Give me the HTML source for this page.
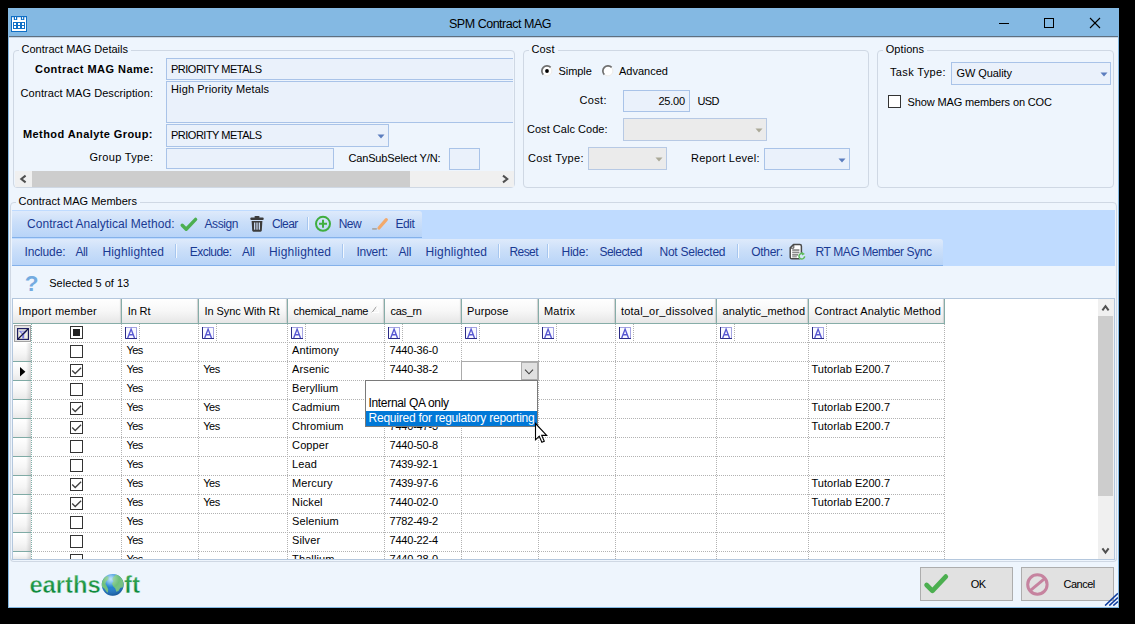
<!DOCTYPE html><html><head><meta charset="utf-8"><title>SPM Contract MAG</title><style>
html,body{margin:0;padding:0}body{width:1135px;height:624px;background:#000;position:relative;overflow:hidden;font-family:"Liberation Sans", sans-serif;}
div,svg,span{position:absolute;box-sizing:border-box}
.t{height:20px;line-height:20px;white-space:pre}
</style></head><body>
<div style="left:8px;top:8px;width:1111px;height:600px;background:#84B9E3"></div>
<div style="left:9px;top:37px;width:1109px;height:570px;background:#EEF5FD"></div>
<div style="left:9px;top:36px;width:1109px;height:1px;background:#5E6F80"></div>
<div style="left:9px;top:37px;width:1109px;height:1px;background:#C9D6E4"></div>
<svg style="left:11px;top:16px;" width="16" height="16" viewBox="0 0 16 16"><rect x="0.5" y="0.5" width="15" height="15" fill="#fff" stroke="#0F6FC6"/>
<rect x="0" y="0" width="16" height="1.2" fill="#0F6FC6"/>
<rect x="2.8" y="0" width="3.4" height="4" fill="#0F6FC6"/><rect x="9.9" y="0" width="3.4" height="4" fill="#0F6FC6"/>
<rect x="4" y="1" width="1" height="2.2" fill="#fff"/><rect x="11.1" y="1" width="1" height="2.2" fill="#fff"/>
<rect x="2" y="6" width="12" height="7" fill="#0F6FC6"/>
<g fill="#fff"><rect x="3" y="7" width="2" height="2"/><rect x="7" y="7" width="2" height="2"/><rect x="11" y="7" width="2" height="2"/>
<rect x="3" y="10" width="2" height="2"/><rect x="7" y="10" width="2" height="2"/><rect x="11" y="10" width="2" height="2"/></g></svg>
<svg style="left:995px;top:14px;" width="110" height="18" viewBox="0 0 110 18"><g stroke="#000" stroke-width="1" fill="none" shape-rendering="crispEdges">
<line x1="4" y1="9.5" x2="14" y2="9.5"/><rect x="49.5" y="4.5" width="9" height="9"/></g>
<g stroke="#000" stroke-width="1.1" fill="none"><line x1="95" y1="4" x2="105" y2="14"/><line x1="105" y1="4" x2="95" y2="14"/></g></svg>
<div style="left:13px;top:50px;width:502px;height:138px;border:1px solid #CFD8E4;border-radius:4px"></div>
<div style="left:18.5px;top:48px;width:112.5px;height:5px;background:#EEF5FD"></div>
<div style="left:523px;top:50px;width:346px;height:138px;border:1px solid #CFD8E4;border-radius:4px"></div>
<div style="left:528.5px;top:48px;width:29.0px;height:5px;background:#EEF5FD"></div>
<div style="left:877px;top:50px;width:237px;height:138px;border:1px solid #CFD8E4;border-radius:4px"></div>
<div style="left:882.75px;top:48px;width:44.25px;height:5px;background:#EEF5FD"></div>
<div style="left:10px;top:202px;width:1107px;height:360px;border:1px solid #CFD8E4;border-radius:4px"></div>
<div style="left:15.5px;top:200px;width:124.5px;height:5px;background:#EEF5FD"></div>
<div style="left:166px;top:58px;width:347px;height:22px;background:#EAF1FB;border:1px solid #A9C3E8;border-right:none"></div>
<div style="left:166px;top:81px;width:347px;height:42px;background:#EAF1FB;border:1px solid #A9C3E8;border-right:none"></div>
<div style="left:166px;top:124px;width:223px;height:23px;background:#EAF1FB;border:1px solid #A9C3E8"></div>
<div style="left:166px;top:148px;width:168px;height:21px;background:#EAF1FB;border:1px solid #A9C3E8"></div>
<div style="left:449px;top:148px;width:31px;height:22px;background:#EAF1FB;border:1px solid #A9C3E8"></div>
<svg style="left:377px;top:133.5px;" width="8" height="5" viewBox="0 0 8 5"><path d="M0.5 0.5 L7.5 0.5 L4 4.5 Z" fill="#5B7DBE"/></svg>
<div style="left:15px;top:171px;width:499px;height:16px;background:#F0F0F0"></div>
<div style="left:32px;top:171px;width:378px;height:16px;background:#CDCDCD"></div>
<svg style="left:15px;top:171px;" width="17" height="16" viewBox="0 0 17 16"><path d="M10.6 4.6 L6.3 8 L10.6 11.4" stroke="#505050" stroke-width="2" fill="none"/></svg>
<svg style="left:497px;top:171px;" width="17" height="16" viewBox="0 0 17 16"><path d="M6 4.6 L10.3 8 L6 11.4" stroke="#505050" stroke-width="2" fill="none"/></svg>
<svg style="left:541px;top:65px;" width="12" height="12" viewBox="0 0 12 12"><circle cx="6" cy="6" r="5.4" fill="#fff"/>
<path d="M9.5 2.5 A4.95 4.95 0 0 1 2.5 9.5" fill="none" stroke="#E9E9E9" stroke-width="1"/>
<path d="M2.35 9.65 A5.15 5.15 0 0 1 9.65 2.35" fill="none" stroke="#707070" stroke-width="1.7"/><circle cx="6" cy="6" r="1.9" fill="#000"/></svg>
<svg style="left:601.5px;top:65px;" width="12" height="12" viewBox="0 0 12 12"><circle cx="6" cy="6" r="5.4" fill="#fff"/>
<path d="M9.5 2.5 A4.95 4.95 0 0 1 2.5 9.5" fill="none" stroke="#E9E9E9" stroke-width="1"/>
<path d="M2.35 9.65 A5.15 5.15 0 0 1 9.65 2.35" fill="none" stroke="#707070" stroke-width="1.7"/></svg>
<div style="left:623px;top:90px;width:67px;height:22px;background:#EAF1FB;border:1px solid #A9C3E8"></div>
<div style="left:623px;top:118px;width:144px;height:23px;background:#EBEBEB;border:1px solid #B7C9E4"></div>
<svg style="left:755px;top:127.5px;" width="8" height="5" viewBox="0 0 8 5"><path d="M0.5 0.5 L7.5 0.5 L4 4.5 Z" fill="#ABA998"/></svg>
<div style="left:588px;top:147px;width:79px;height:23px;background:#EBEBEB;border:1px solid #B7C9E4"></div>
<svg style="left:655px;top:156.5px;" width="8" height="5" viewBox="0 0 8 5"><path d="M0.5 0.5 L7.5 0.5 L4 4.5 Z" fill="#ABA998"/></svg>
<div style="left:764px;top:148px;width:86px;height:22px;background:#EAF1FB;border:1px solid #A9C3E8"></div>
<svg style="left:838px;top:157.5px;" width="8" height="5" viewBox="0 0 8 5"><path d="M0.5 0.5 L7.5 0.5 L4 4.5 Z" fill="#5B7DBE"/></svg>
<div style="left:951px;top:62px;width:160px;height:23px;background:#EAF1FB;border:1px solid #A9C3E8"></div>
<svg style="left:1099.5px;top:71.5px;" width="8" height="5" viewBox="0 0 8 5"><path d="M0.5 0.5 L7.5 0.5 L4 4.5 Z" fill="#5B7DBE"/></svg>
<div style="left:888px;top:95px;width:13px;height:13px;background:#fff;border:1px solid #333"></div>
<div style="left:12px;top:210px;width:1103px;height:56px;background:#BFDBFF"></div>
<div style="left:12px;top:211px;width:410px;height:27px;background:linear-gradient(#DEEAFB,#CBDFF9 42%,#B8D4F8);border-bottom:1px solid #84B1EA;border-radius:0 3px 0 0"></div>
<div style="left:12px;top:239px;width:931px;height:27px;background:linear-gradient(#DEEAFB,#CBDFF9 42%,#B8D4F8);border-bottom:1px solid #84B1EA;border-radius:0 3px 0 0"></div>
<div style="left:306.5px;top:217px;width:1px;height:13px;background:#A6C6EF"></div>
<div style="left:307.5px;top:217px;width:1px;height:13px;background:#F2F7FE"></div>
<div style="left:175px;top:244px;width:1px;height:14px;background:#A6C6EF"></div>
<div style="left:176px;top:244px;width:1px;height:14px;background:#F2F7FE"></div>
<div style="left:342px;top:244px;width:1px;height:14px;background:#A6C6EF"></div>
<div style="left:343px;top:244px;width:1px;height:14px;background:#F2F7FE"></div>
<div style="left:498px;top:244px;width:1px;height:14px;background:#A6C6EF"></div>
<div style="left:499px;top:244px;width:1px;height:14px;background:#F2F7FE"></div>
<div style="left:547px;top:244px;width:1px;height:14px;background:#A6C6EF"></div>
<div style="left:548px;top:244px;width:1px;height:14px;background:#F2F7FE"></div>
<div style="left:737px;top:244px;width:1px;height:14px;background:#A6C6EF"></div>
<div style="left:738px;top:244px;width:1px;height:14px;background:#F2F7FE"></div>
<svg style="left:179px;top:215px;" width="20" height="18" viewBox="0 0 20 18"><path d="M3.2 10.3 L7.2 14.2 L16.6 4.4" stroke="#4CAF50" stroke-width="3.4" fill="none" stroke-linecap="round" stroke-linejoin="round"/></svg>
<svg style="left:250px;top:216px;" width="14" height="16" viewBox="0 0 14 16"><g fill="#3C3C3C"><rect x="4.5" y="0" width="5" height="2" rx="0.8"/><rect x="0.3" y="1.5" width="13.4" height="2.6" rx="1"/>
<path d="M1.6 5 H12.4 L11.8 14.6 Q11.7 15.7 10.6 15.7 H3.4 Q2.3 15.7 2.2 14.6 Z"/></g>
<g fill="#C8D8EE"><rect x="4" y="6.5" width="1.3" height="7.2"/><rect x="6.35" y="6.5" width="1.3" height="7.2"/><rect x="8.7" y="6.5" width="1.3" height="7.2"/></g></svg>
<svg style="left:314px;top:215px;" width="18" height="18" viewBox="0 0 18 18"><circle cx="9" cy="8.8" r="7" fill="none" stroke="#3FAE3F" stroke-width="2"/>
<path d="M9 4.8 V12.8 M5 8.8 H13" stroke="#3FAE3F" stroke-width="2" fill="none"/></svg>
<svg style="left:371px;top:216px;" width="18" height="16" viewBox="0 0 18 16"><path d="M8 12 L15.3 3.6" stroke="#F2A96B" stroke-width="3.2" stroke-linecap="round" fill="none"/>
<rect x="1.2" y="12" width="4.6" height="1.8" fill="#A9A9A9"/></svg>
<svg style="left:789px;top:243px;" width="18" height="18" viewBox="0 0 18 18"><path d="M4.5 1.6 H10.8 Q12.4 1.6 12.4 3.2 V14.2 Q12.4 15.8 10.8 15.8 H2.8 Q1.2 15.8 1.2 14.2 V4.9 Z" fill="#fff" stroke="#4A4A4A" stroke-width="1.5" stroke-linejoin="round"/>
<path d="M4.8 1.8 V5.2 H1.4" fill="none" stroke="#4A4A4A" stroke-width="1"/>
<g fill="#8A8A8A"><rect x="3.2" y="6.2" width="7.2" height="1.7"/><rect x="3.2" y="8.6" width="7.2" height="1.7"/><rect x="3.2" y="11" width="6" height="1.7"/><rect x="3.2" y="13.2" width="4.6" height="1.2"/></g>
<circle cx="12.9" cy="13.2" r="3.4" fill="#D5E4F8"/>
<path d="M15.6 13.2 A2.8 2.8 0 1 1 13.6 10.5" fill="none" stroke="#5DBB5D" stroke-width="1.5"/>
<path d="M13 8.9 L16 10.9 L13 12.4 Z" fill="#5DBB5D"/></svg>
<div style="left:12px;top:298px;width:1103px;height:262px;background:#fff;border:1px solid #B4C7DD"></div>
<div style="left:13px;top:299px;width:109px;height:25px;background:linear-gradient(#FFFFFF,#F7F7F7 50%,#E6E6E6);border-right:1px solid #86ADA8;border-bottom:1px solid #86ADA8;box-shadow:inset -2px 0 1px -1px #D0D0D0"></div>
<div style="left:122px;top:299px;width:77px;height:25px;background:linear-gradient(#FFFFFF,#F7F7F7 50%,#E6E6E6);border-right:1px solid #86ADA8;border-bottom:1px solid #86ADA8;box-shadow:inset -2px 0 1px -1px #D0D0D0"></div>
<div style="left:199px;top:299px;width:89px;height:25px;background:linear-gradient(#FFFFFF,#F7F7F7 50%,#E6E6E6);border-right:1px solid #86ADA8;border-bottom:1px solid #86ADA8;box-shadow:inset -2px 0 1px -1px #D0D0D0"></div>
<div style="left:288px;top:299px;width:97px;height:25px;background:linear-gradient(#FFFFFF,#F7F7F7 50%,#E6E6E6);border-right:1px solid #86ADA8;border-bottom:1px solid #86ADA8;box-shadow:inset -2px 0 1px -1px #D0D0D0"></div>
<div style="left:385px;top:299px;width:77px;height:25px;background:linear-gradient(#FFFFFF,#F7F7F7 50%,#E6E6E6);border-right:1px solid #86ADA8;border-bottom:1px solid #86ADA8;box-shadow:inset -2px 0 1px -1px #D0D0D0"></div>
<div style="left:462px;top:299px;width:77px;height:25px;background:linear-gradient(#FFFFFF,#F7F7F7 50%,#E6E6E6);border-right:1px solid #86ADA8;border-bottom:1px solid #86ADA8;box-shadow:inset -2px 0 1px -1px #D0D0D0"></div>
<div style="left:539px;top:299px;width:77px;height:25px;background:linear-gradient(#FFFFFF,#F7F7F7 50%,#E6E6E6);border-right:1px solid #86ADA8;border-bottom:1px solid #86ADA8;box-shadow:inset -2px 0 1px -1px #D0D0D0"></div>
<div style="left:616px;top:299px;width:101px;height:25px;background:linear-gradient(#FFFFFF,#F7F7F7 50%,#E6E6E6);border-right:1px solid #86ADA8;border-bottom:1px solid #86ADA8;box-shadow:inset -2px 0 1px -1px #D0D0D0"></div>
<div style="left:717px;top:299px;width:92px;height:25px;background:linear-gradient(#FFFFFF,#F7F7F7 50%,#E6E6E6);border-right:1px solid #86ADA8;border-bottom:1px solid #86ADA8;box-shadow:inset -2px 0 1px -1px #D0D0D0"></div>
<div style="left:809px;top:299px;width:136px;height:25px;background:linear-gradient(#FFFFFF,#F7F7F7 50%,#E6E6E6);border-right:1px solid #86ADA8;border-bottom:1px solid #86ADA8;box-shadow:inset -2px 0 1px -1px #D0D0D0"></div>
<svg style="left:371px;top:305px;" width="9" height="9" viewBox="0 0 9 9"><path d="M1 7.5 L5.5 1.5" stroke="#9A9A9A" stroke-width="1" fill="none"/><path d="M5.5 1.5 L8 7.5 L1 7.5" stroke="#fff" stroke-width="1" fill="none"/></svg>
<div style="left:31px;top:342px;width:914px;height:1px;background-image:repeating-linear-gradient(90deg,#B2B2B2 0 1px,transparent 1px 2px)"></div>
<div style="left:31px;top:361px;width:914px;height:1px;background-image:repeating-linear-gradient(90deg,#B2B2B2 0 1px,transparent 1px 2px)"></div>
<div style="left:31px;top:380px;width:914px;height:1px;background-image:repeating-linear-gradient(90deg,#B2B2B2 0 1px,transparent 1px 2px)"></div>
<div style="left:31px;top:399px;width:914px;height:1px;background-image:repeating-linear-gradient(90deg,#B2B2B2 0 1px,transparent 1px 2px)"></div>
<div style="left:31px;top:418px;width:914px;height:1px;background-image:repeating-linear-gradient(90deg,#B2B2B2 0 1px,transparent 1px 2px)"></div>
<div style="left:31px;top:437px;width:914px;height:1px;background-image:repeating-linear-gradient(90deg,#B2B2B2 0 1px,transparent 1px 2px)"></div>
<div style="left:31px;top:456px;width:914px;height:1px;background-image:repeating-linear-gradient(90deg,#B2B2B2 0 1px,transparent 1px 2px)"></div>
<div style="left:31px;top:475px;width:914px;height:1px;background-image:repeating-linear-gradient(90deg,#B2B2B2 0 1px,transparent 1px 2px)"></div>
<div style="left:31px;top:494px;width:914px;height:1px;background-image:repeating-linear-gradient(90deg,#B2B2B2 0 1px,transparent 1px 2px)"></div>
<div style="left:31px;top:513px;width:914px;height:1px;background-image:repeating-linear-gradient(90deg,#B2B2B2 0 1px,transparent 1px 2px)"></div>
<div style="left:31px;top:532px;width:914px;height:1px;background-image:repeating-linear-gradient(90deg,#B2B2B2 0 1px,transparent 1px 2px)"></div>
<div style="left:31px;top:551px;width:914px;height:1px;background-image:repeating-linear-gradient(90deg,#B2B2B2 0 1px,transparent 1px 2px)"></div>
<div style="left:121px;top:324px;width:1px;height:235px;background-image:repeating-linear-gradient(180deg,#B2B2B2 0 1px,transparent 1px 2px)"></div>
<div style="left:198px;top:324px;width:1px;height:235px;background-image:repeating-linear-gradient(180deg,#B2B2B2 0 1px,transparent 1px 2px)"></div>
<div style="left:287px;top:324px;width:1px;height:235px;background-image:repeating-linear-gradient(180deg,#B2B2B2 0 1px,transparent 1px 2px)"></div>
<div style="left:384px;top:324px;width:1px;height:235px;background-image:repeating-linear-gradient(180deg,#B2B2B2 0 1px,transparent 1px 2px)"></div>
<div style="left:461px;top:324px;width:1px;height:235px;background-image:repeating-linear-gradient(180deg,#B2B2B2 0 1px,transparent 1px 2px)"></div>
<div style="left:538px;top:324px;width:1px;height:235px;background-image:repeating-linear-gradient(180deg,#B2B2B2 0 1px,transparent 1px 2px)"></div>
<div style="left:615px;top:324px;width:1px;height:235px;background-image:repeating-linear-gradient(180deg,#B2B2B2 0 1px,transparent 1px 2px)"></div>
<div style="left:716px;top:324px;width:1px;height:235px;background-image:repeating-linear-gradient(180deg,#B2B2B2 0 1px,transparent 1px 2px)"></div>
<div style="left:808px;top:324px;width:1px;height:235px;background-image:repeating-linear-gradient(180deg,#B2B2B2 0 1px,transparent 1px 2px)"></div>
<div style="left:944px;top:324px;width:1px;height:235px;background-image:repeating-linear-gradient(180deg,#B2B2B2 0 1px,transparent 1px 2px)"></div>
<div style="left:139px;top:324px;width:1px;height:18px;background-image:repeating-linear-gradient(180deg,#B2B2B2 0 1px,transparent 1px 2px)"></div>
<svg style="left:125px;top:327px;" width="12" height="12" viewBox="0 0 12 12"><rect x="0.5" y="0.5" width="11" height="11" fill="#FAFAFF" stroke="#A4A4E2"/><path d="M0.5 0 V11.5 H12" fill="none" stroke="#2B2B86"/>
<path d="M2.7 11 L6.1 2.1 L9.5 11 M4 7.8 H8.2" stroke="#5858D2" stroke-width="1.4" fill="none"/></svg>
<div style="left:216px;top:324px;width:1px;height:18px;background-image:repeating-linear-gradient(180deg,#B2B2B2 0 1px,transparent 1px 2px)"></div>
<svg style="left:202px;top:327px;" width="12" height="12" viewBox="0 0 12 12"><rect x="0.5" y="0.5" width="11" height="11" fill="#FAFAFF" stroke="#A4A4E2"/><path d="M0.5 0 V11.5 H12" fill="none" stroke="#2B2B86"/>
<path d="M2.7 11 L6.1 2.1 L9.5 11 M4 7.8 H8.2" stroke="#5858D2" stroke-width="1.4" fill="none"/></svg>
<div style="left:305px;top:324px;width:1px;height:18px;background-image:repeating-linear-gradient(180deg,#B2B2B2 0 1px,transparent 1px 2px)"></div>
<svg style="left:291px;top:327px;" width="12" height="12" viewBox="0 0 12 12"><rect x="0.5" y="0.5" width="11" height="11" fill="#FAFAFF" stroke="#A4A4E2"/><path d="M0.5 0 V11.5 H12" fill="none" stroke="#2B2B86"/>
<path d="M2.7 11 L6.1 2.1 L9.5 11 M4 7.8 H8.2" stroke="#5858D2" stroke-width="1.4" fill="none"/></svg>
<div style="left:402px;top:324px;width:1px;height:18px;background-image:repeating-linear-gradient(180deg,#B2B2B2 0 1px,transparent 1px 2px)"></div>
<svg style="left:388px;top:327px;" width="12" height="12" viewBox="0 0 12 12"><rect x="0.5" y="0.5" width="11" height="11" fill="#FAFAFF" stroke="#A4A4E2"/><path d="M0.5 0 V11.5 H12" fill="none" stroke="#2B2B86"/>
<path d="M2.7 11 L6.1 2.1 L9.5 11 M4 7.8 H8.2" stroke="#5858D2" stroke-width="1.4" fill="none"/></svg>
<div style="left:479px;top:324px;width:1px;height:18px;background-image:repeating-linear-gradient(180deg,#B2B2B2 0 1px,transparent 1px 2px)"></div>
<svg style="left:465px;top:327px;" width="12" height="12" viewBox="0 0 12 12"><rect x="0.5" y="0.5" width="11" height="11" fill="#FAFAFF" stroke="#A4A4E2"/><path d="M0.5 0 V11.5 H12" fill="none" stroke="#2B2B86"/>
<path d="M2.7 11 L6.1 2.1 L9.5 11 M4 7.8 H8.2" stroke="#5858D2" stroke-width="1.4" fill="none"/></svg>
<div style="left:556px;top:324px;width:1px;height:18px;background-image:repeating-linear-gradient(180deg,#B2B2B2 0 1px,transparent 1px 2px)"></div>
<svg style="left:542px;top:327px;" width="12" height="12" viewBox="0 0 12 12"><rect x="0.5" y="0.5" width="11" height="11" fill="#FAFAFF" stroke="#A4A4E2"/><path d="M0.5 0 V11.5 H12" fill="none" stroke="#2B2B86"/>
<path d="M2.7 11 L6.1 2.1 L9.5 11 M4 7.8 H8.2" stroke="#5858D2" stroke-width="1.4" fill="none"/></svg>
<div style="left:633px;top:324px;width:1px;height:18px;background-image:repeating-linear-gradient(180deg,#B2B2B2 0 1px,transparent 1px 2px)"></div>
<svg style="left:619px;top:327px;" width="12" height="12" viewBox="0 0 12 12"><rect x="0.5" y="0.5" width="11" height="11" fill="#FAFAFF" stroke="#A4A4E2"/><path d="M0.5 0 V11.5 H12" fill="none" stroke="#2B2B86"/>
<path d="M2.7 11 L6.1 2.1 L9.5 11 M4 7.8 H8.2" stroke="#5858D2" stroke-width="1.4" fill="none"/></svg>
<div style="left:734px;top:324px;width:1px;height:18px;background-image:repeating-linear-gradient(180deg,#B2B2B2 0 1px,transparent 1px 2px)"></div>
<svg style="left:720px;top:327px;" width="12" height="12" viewBox="0 0 12 12"><rect x="0.5" y="0.5" width="11" height="11" fill="#FAFAFF" stroke="#A4A4E2"/><path d="M0.5 0 V11.5 H12" fill="none" stroke="#2B2B86"/>
<path d="M2.7 11 L6.1 2.1 L9.5 11 M4 7.8 H8.2" stroke="#5858D2" stroke-width="1.4" fill="none"/></svg>
<div style="left:826px;top:324px;width:1px;height:18px;background-image:repeating-linear-gradient(180deg,#B2B2B2 0 1px,transparent 1px 2px)"></div>
<svg style="left:812px;top:327px;" width="12" height="12" viewBox="0 0 12 12"><rect x="0.5" y="0.5" width="11" height="11" fill="#FAFAFF" stroke="#A4A4E2"/><path d="M0.5 0 V11.5 H12" fill="none" stroke="#2B2B86"/>
<path d="M2.7 11 L6.1 2.1 L9.5 11 M4 7.8 H8.2" stroke="#5858D2" stroke-width="1.4" fill="none"/></svg>
<div style="left:13px;top:343px;width:18px;height:19px;background:linear-gradient(90deg,rgba(0,0,0,0) 72%,rgba(0,0,0,0.13)),linear-gradient(180deg,#FFFFFF,#F5F5F5 60%,#E9E9E9);border-bottom:1px solid #7FAAA5"></div>
<div style="left:13px;top:362px;width:18px;height:19px;background:linear-gradient(90deg,rgba(0,0,0,0) 72%,rgba(0,0,0,0.13)),linear-gradient(180deg,#FFFFFF,#F5F5F5 60%,#E9E9E9);border-bottom:1px solid #7FAAA5"></div>
<div style="left:13px;top:381px;width:18px;height:19px;background:linear-gradient(90deg,rgba(0,0,0,0) 72%,rgba(0,0,0,0.13)),linear-gradient(180deg,#FFFFFF,#F5F5F5 60%,#E9E9E9);border-bottom:1px solid #7FAAA5"></div>
<div style="left:13px;top:400px;width:18px;height:19px;background:linear-gradient(90deg,rgba(0,0,0,0) 72%,rgba(0,0,0,0.13)),linear-gradient(180deg,#FFFFFF,#F5F5F5 60%,#E9E9E9);border-bottom:1px solid #7FAAA5"></div>
<div style="left:13px;top:419px;width:18px;height:19px;background:linear-gradient(90deg,rgba(0,0,0,0) 72%,rgba(0,0,0,0.13)),linear-gradient(180deg,#FFFFFF,#F5F5F5 60%,#E9E9E9);border-bottom:1px solid #7FAAA5"></div>
<div style="left:13px;top:438px;width:18px;height:19px;background:linear-gradient(90deg,rgba(0,0,0,0) 72%,rgba(0,0,0,0.13)),linear-gradient(180deg,#FFFFFF,#F5F5F5 60%,#E9E9E9);border-bottom:1px solid #7FAAA5"></div>
<div style="left:13px;top:457px;width:18px;height:19px;background:linear-gradient(90deg,rgba(0,0,0,0) 72%,rgba(0,0,0,0.13)),linear-gradient(180deg,#FFFFFF,#F5F5F5 60%,#E9E9E9);border-bottom:1px solid #7FAAA5"></div>
<div style="left:13px;top:476px;width:18px;height:19px;background:linear-gradient(90deg,rgba(0,0,0,0) 72%,rgba(0,0,0,0.13)),linear-gradient(180deg,#FFFFFF,#F5F5F5 60%,#E9E9E9);border-bottom:1px solid #7FAAA5"></div>
<div style="left:13px;top:495px;width:18px;height:19px;background:linear-gradient(90deg,rgba(0,0,0,0) 72%,rgba(0,0,0,0.13)),linear-gradient(180deg,#FFFFFF,#F5F5F5 60%,#E9E9E9);border-bottom:1px solid #7FAAA5"></div>
<div style="left:13px;top:514px;width:18px;height:19px;background:linear-gradient(90deg,rgba(0,0,0,0) 72%,rgba(0,0,0,0.13)),linear-gradient(180deg,#FFFFFF,#F5F5F5 60%,#E9E9E9);border-bottom:1px solid #7FAAA5"></div>
<div style="left:13px;top:533px;width:18px;height:19px;background:linear-gradient(90deg,rgba(0,0,0,0) 72%,rgba(0,0,0,0.13)),linear-gradient(180deg,#FFFFFF,#F5F5F5 60%,#E9E9E9);border-bottom:1px solid #7FAAA5"></div>
<div style="left:13px;top:552px;width:18px;height:8px;background:linear-gradient(90deg,rgba(0,0,0,0) 72%,rgba(0,0,0,0.13)),linear-gradient(180deg,#FFFFFF,#F5F5F5 60%,#E9E9E9);border-bottom:1px solid #7FAAA5"></div>
<div style="left:31px;top:324px;width:1px;height:235px;background-image:repeating-linear-gradient(180deg,#7FB0AA 0 1px,transparent 1px 2px)"></div>
<div style="left:14px;top:325px;width:17px;height:17px;background:#E4E4E4;border:1px solid #A2A2A2"></div>
<svg style="left:17px;top:328px;" width="12" height="12" viewBox="0 0 12 12"><rect x="0.6" y="0.6" width="10.8" height="10.8" fill="#EFEEE2" stroke="#1E1E62" stroke-width="1.2"/>
<path d="M1.6 2.8 H10.4 L7.2 6.6 V10.6 H5.2 V6.6 Z" fill="#7A7AE6"/><path d="M3.6 3.4 H8.4 L6.2 6 Z" fill="#EFEEE2" opacity="0.8"/><path d="M1 11 L11 1" stroke="#15153F" stroke-width="1.3"/></svg>
<svg style="left:70px;top:326px;" width="13" height="13" viewBox="0 0 13 13"><rect x="0.5" y="0.5" width="12" height="12" fill="#fff" stroke="#333"/><rect x="3" y="3" width="7" height="7" fill="#222"/></svg>
<svg style="left:70px;top:345px;" width="13" height="13" viewBox="0 0 13 13"><rect x="0.5" y="0.5" width="12" height="12" fill="#fff" stroke="#333"/></svg>
<svg style="left:70px;top:364px;" width="13" height="13" viewBox="0 0 13 13"><rect x="0.5" y="0.5" width="12" height="12" fill="#fff" stroke="#333"/><path d="M2.2 6.5 L5.2 9.5 L11.1 3.7" stroke="#404040" stroke-width="1.3" fill="none"/></svg>
<svg style="left:70px;top:383px;" width="13" height="13" viewBox="0 0 13 13"><rect x="0.5" y="0.5" width="12" height="12" fill="#fff" stroke="#333"/></svg>
<svg style="left:70px;top:402px;" width="13" height="13" viewBox="0 0 13 13"><rect x="0.5" y="0.5" width="12" height="12" fill="#fff" stroke="#333"/><path d="M2.2 6.5 L5.2 9.5 L11.1 3.7" stroke="#404040" stroke-width="1.3" fill="none"/></svg>
<svg style="left:70px;top:421px;" width="13" height="13" viewBox="0 0 13 13"><rect x="0.5" y="0.5" width="12" height="12" fill="#fff" stroke="#333"/><path d="M2.2 6.5 L5.2 9.5 L11.1 3.7" stroke="#404040" stroke-width="1.3" fill="none"/></svg>
<svg style="left:70px;top:440px;" width="13" height="13" viewBox="0 0 13 13"><rect x="0.5" y="0.5" width="12" height="12" fill="#fff" stroke="#333"/></svg>
<svg style="left:70px;top:459px;" width="13" height="13" viewBox="0 0 13 13"><rect x="0.5" y="0.5" width="12" height="12" fill="#fff" stroke="#333"/></svg>
<svg style="left:70px;top:478px;" width="13" height="13" viewBox="0 0 13 13"><rect x="0.5" y="0.5" width="12" height="12" fill="#fff" stroke="#333"/><path d="M2.2 6.5 L5.2 9.5 L11.1 3.7" stroke="#404040" stroke-width="1.3" fill="none"/></svg>
<svg style="left:70px;top:497px;" width="13" height="13" viewBox="0 0 13 13"><rect x="0.5" y="0.5" width="12" height="12" fill="#fff" stroke="#333"/><path d="M2.2 6.5 L5.2 9.5 L11.1 3.7" stroke="#404040" stroke-width="1.3" fill="none"/></svg>
<svg style="left:70px;top:516px;" width="13" height="13" viewBox="0 0 13 13"><rect x="0.5" y="0.5" width="12" height="12" fill="#fff" stroke="#333"/></svg>
<svg style="left:70px;top:535px;" width="13" height="13" viewBox="0 0 13 13"><rect x="0.5" y="0.5" width="12" height="12" fill="#fff" stroke="#333"/></svg>
<svg style="left:70px;top:554px;" width="13" height="13" viewBox="0 0 13 13"><rect x="0.5" y="0.5" width="12" height="12" fill="#fff" stroke="#333"/></svg>
<svg style="left:20px;top:367px;" width="6" height="10" viewBox="0 0 6 10"><path d="M0 0 L5.4 4.7 L0 9.4 Z" fill="#000"/></svg>
<div style="left:1098px;top:299px;width:16px;height:260px;background:#F0F0F0"></div>
<div style="left:1098px;top:316px;width:15px;height:180px;background:#CDCDCD"></div>
<svg style="left:1098px;top:300px;" width="16" height="16" viewBox="0 0 16 16"><path d="M4.4 10.4 L7.5 6.2 L10.6 10.4" stroke="#505050" stroke-width="2" fill="none"/></svg>
<svg style="left:1098px;top:542px;" width="16" height="16" viewBox="0 0 16 16"><path d="M4.4 6.4 L7.5 10.6 L10.6 6.4" stroke="#505050" stroke-width="2" fill="none"/></svg>
<div style="left:461px;top:361px;width:78px;height:20px;background:#fff;border:1px solid #ABABAB;z-index:9"></div>
<div style="left:521px;top:362px;width:17px;height:18px;background:#E1E1E1;border:1px solid #ADADAD;z-index:9"></div>
<svg style="left:524px;top:368px;z-index:9" width="10" height="8" viewBox="0 0 10 8"><path d="M1 1.6 L5 5.8 L9 1.6" stroke="#404040" stroke-width="1.1" fill="none"/></svg>
<div style="left:365px;top:380px;width:173px;height:47px;background:#fff;border:1px solid #7A7A7A;z-index:10"></div>
<div style="left:366px;top:411px;width:171px;height:15px;background:#0078D7;z-index:10"></div>
<svg style="left:534px;top:422px;z-index:12" width="15" height="22" viewBox="0 0 15 22"><path d="M1.5 1.5 L1.5 17.8 L5.2 14.3 L7.9 20.2 L10.3 19.2 L7.7 13.4 L12.7 13.4 Z" fill="#fff" stroke="#000" stroke-width="1.1" stroke-linejoin="miter"/></svg>
<div style="left:920px;top:567px;width:93px;height:34px;background:#E1E1E1;border:1px solid #ADADAD"></div>
<div style="left:1021px;top:567px;width:93px;height:34px;background:#E1E1E1;border:1px solid #ADADAD"></div>
<svg style="left:922px;top:572px;" width="28" height="24" viewBox="0 0 28 24"><path d="M4.6 13 L10.4 18.8 L23.8 4.6" stroke="#4CAF50" stroke-width="4.7" fill="none" stroke-linecap="round" stroke-linejoin="round"/></svg>
<svg style="left:1025px;top:572px;" width="25" height="25" viewBox="0 0 25 25"><circle cx="12.4" cy="12.5" r="9.7" fill="none" stroke="#C6839F" stroke-width="3"/><path d="M5.2 18.6 L19.6 6.6" stroke="#C6839F" stroke-width="3"/></svg>
<svg style="left:1104px;top:592px;" width="14" height="14" viewBox="0 0 14 14"><path d="M1.1 13.6 L13.9 1.3 M5.3 13.6 L13.9 5.6 M9.3 13.6 L13.9 9.5" stroke="#0D3C9E" stroke-width="1.5" fill="none"/></svg>
<svg style="left:28px;top:570px" width="116" height="30" viewBox="0 0 116 30">
<defs><linearGradient id="lg" x1="0" y1="0" x2="0" y2="1"><stop offset="0.15" stop-color="#40AC59"/><stop offset="0.75" stop-color="#0F8A3B"/><stop offset="1" stop-color="#149040"/></linearGradient>
<radialGradient id="gl" cx="0.42" cy="0.25" r="0.85"><stop offset="0" stop-color="#8FD0F5"/><stop offset="0.35" stop-color="#2A8AD8"/><stop offset="0.75" stop-color="#1268B8"/><stop offset="1" stop-color="#0A4A92"/></radialGradient>
<radialGradient id="sh" cx="0.4" cy="0.22" r="0.9"><stop offset="0" stop-color="#fff" stop-opacity="0.45"/><stop offset="0.45" stop-color="#fff" stop-opacity="0"/><stop offset="1" stop-color="#003060" stop-opacity="0.35"/></radialGradient>
<clipPath id="gc"><circle cx="84.7" cy="14.8" r="10.9"/></clipPath></defs>
<text x="1.4" y="22.8" font-family="Liberation Sans, sans-serif" font-weight="bold" font-size="24.4" fill="url(#lg)" stroke="#EEF5FD" stroke-width="0.45" textLength="71.4" lengthAdjust="spacingAndGlyphs">earths</text>
<circle cx="84.7" cy="14.8" r="10.9" fill="url(#gl)"/>
<g clip-path="url(#gc)" fill="#6EC07A">
<path d="M73 11.3 L76.3 7.5 L79.1 6 L80.7 6.9 L80.2 9.7 L78.2 11.3 L77.4 14 L79.1 16.8 L80.2 19.5 L79.9 22.8 L78.5 21.7 L76.3 18.4 L73 16 Z"/>
<path d="M85.1 7.5 L87.8 4.5 L91.6 5.5 L95 9.7 L96.5 14 L95 17.3 L92.2 17.9 L90.5 21.1 L88.3 21.7 L87.3 18.4 L85.1 16.2 L84 13.5 L85.6 11.3 L84.3 9.1 Z"/>
</g>
<circle cx="84.7" cy="14.8" r="10.9" fill="url(#sh)"/>
<text x="96" y="22.8" font-family="Liberation Sans, sans-serif" font-weight="bold" font-size="24.4" fill="url(#lg)" stroke="#EEF5FD" stroke-width="0.45" textLength="16.2" lengthAdjust="spacingAndGlyphs">ft</text>
</svg>
<span class="t" style="font-size:12.5px;font-weight:normal;color:#000;left:449px;top:14px;letter-spacing:-0.483px;">SPM Contract MAG</span>
<span class="t" style="font-size:11px;font-weight:normal;color:#000;left:21.5px;top:39px;letter-spacing:0.007px;">Contract MAG Details</span>
<span class="t" style="font-size:11px;font-weight:normal;color:#000;left:531.5px;top:39px;letter-spacing:0.125px;">Cost</span>
<span class="t" style="font-size:11px;font-weight:normal;color:#000;left:885.75px;top:39px;letter-spacing:0.055px;">Options</span>
<span class="t" style="font-size:11px;font-weight:normal;color:#000;left:18.5px;top:191px;letter-spacing:-0.005px;">Contract MAG Members</span>
<span class="t" style="font-size:11px;font-weight:bold;color:#000;left:35px;top:59px;letter-spacing:0.463px;">Contract MAG Name:</span>
<span class="t" style="font-size:11px;font-weight:normal;color:#000;left:20.5px;top:83px;letter-spacing:0.070px;">Contract MAG Description:</span>
<span class="t" style="font-size:11px;font-weight:bold;color:#000;left:23px;top:124px;letter-spacing:0.415px;">Method Analyte Group:</span>
<span class="t" style="font-size:11px;font-weight:normal;color:#000;left:89.5px;top:147px;letter-spacing:0.316px;">Group Type:</span>
<span class="t" style="font-size:11px;font-weight:normal;color:#000;left:348.5px;top:148px;letter-spacing:-0.161px;">CanSubSelect Y/N:</span>
<span class="t" style="font-size:11px;font-weight:normal;color:#000;left:171px;top:59px;letter-spacing:-0.501px;">PRIORITY METALS</span>
<span class="t" style="font-size:11px;font-weight:normal;color:#000;left:171px;top:79px;letter-spacing:0.139px;">High Priority Metals</span>
<span class="t" style="font-size:11px;font-weight:normal;color:#000;left:171px;top:125px;letter-spacing:-0.501px;">PRIORITY METALS</span>
<span class="t" style="font-size:11px;font-weight:normal;color:#000;left:558.5px;top:61px;letter-spacing:-0.075px;">Simple</span>
<span class="t" style="font-size:11px;font-weight:normal;color:#000;left:619px;top:61px;letter-spacing:0.009px;">Advanced</span>
<span class="t" style="font-size:11px;font-weight:normal;color:#000;left:579.5px;top:90px;letter-spacing:0.328px;">Cost:</span>
<span class="t" style="font-size:11px;font-weight:normal;color:#000;left:658.5px;top:90.5px;letter-spacing:-0.258px;">25.00</span>
<span class="t" style="font-size:11px;font-weight:normal;color:#000;left:697.43px;top:90.5px;letter-spacing:-0.550px;">USD</span>
<span class="t" style="font-size:11px;font-weight:normal;color:#000;left:527px;top:118.5px;letter-spacing:0.029px;">Cost Calc Code:</span>
<span class="t" style="font-size:11px;font-weight:normal;color:#000;left:528px;top:147.5px;letter-spacing:0.345px;">Cost Type:</span>
<span class="t" style="font-size:11px;font-weight:normal;color:#000;left:691px;top:147.5px;letter-spacing:0.255px;">Report Level:</span>
<span class="t" style="font-size:11px;font-weight:normal;color:#000;left:890px;top:62px;letter-spacing:0.345px;">Task Type:</span>
<span class="t" style="font-size:11px;font-weight:normal;color:#000;left:956.5px;top:63px;letter-spacing:-0.082px;">GW Quality</span>
<span class="t" style="font-size:11px;font-weight:normal;color:#000;left:907.5px;top:91.5px;letter-spacing:-0.129px;">Show MAG members on COC</span>
<span class="t" style="font-size:12px;font-weight:normal;color:#1A3A93;left:27px;top:214px;letter-spacing:0.055px;">Contract Analytical Method:</span>
<span class="t" style="font-size:12px;font-weight:normal;color:#1A3A93;left:204.5px;top:214px;letter-spacing:-0.406px;">Assign</span>
<span class="t" style="font-size:12px;font-weight:normal;color:#1A3A93;left:271.88px;top:214px;letter-spacing:-0.550px;">Clear</span>
<span class="t" style="font-size:12px;font-weight:normal;color:#1A3A93;left:338.67px;top:214px;letter-spacing:-0.550px;">New</span>
<span class="t" style="font-size:12px;font-weight:normal;color:#1A3A93;left:395.6px;top:214px;letter-spacing:-0.513px;">Edit</span>
<span class="t" style="font-size:12px;font-weight:normal;color:#1A3A93;left:24.5px;top:242px;letter-spacing:-0.147px;">Include:</span>
<span class="t" style="font-size:12px;font-weight:normal;color:#1A3A93;left:75.5px;top:242px;letter-spacing:-0.422px;">All</span>
<span class="t" style="font-size:12px;font-weight:normal;color:#1A3A93;left:102.5px;top:242px;letter-spacing:0.145px;">Highlighted</span>
<span class="t" style="font-size:12px;font-weight:normal;color:#1A3A93;left:189.75px;top:242px;letter-spacing:-0.540px;">Exclude:</span>
<span class="t" style="font-size:12px;font-weight:normal;color:#1A3A93;left:242px;top:242px;letter-spacing:-0.172px;">All</span>
<span class="t" style="font-size:12px;font-weight:normal;color:#1A3A93;left:269px;top:242px;letter-spacing:0.195px;">Highlighted</span>
<span class="t" style="font-size:12px;font-weight:normal;color:#1A3A93;left:356.5px;top:242px;letter-spacing:-0.310px;">Invert:</span>
<span class="t" style="font-size:12px;font-weight:normal;color:#1A3A93;left:398.5px;top:242px;letter-spacing:-0.172px;">All</span>
<span class="t" style="font-size:12px;font-weight:normal;color:#1A3A93;left:425.5px;top:242px;letter-spacing:0.145px;">Highlighted</span>
<span class="t" style="font-size:12px;font-weight:normal;color:#1A3A93;left:509.42px;top:242px;letter-spacing:-0.550px;">Reset</span>
<span class="t" style="font-size:12px;font-weight:normal;color:#1A3A93;left:561.5px;top:242px;letter-spacing:-0.254px;">Hide:</span>
<span class="t" style="font-size:12px;font-weight:normal;color:#1A3A93;left:599.5px;top:242px;letter-spacing:-0.529px;">Selected</span>
<span class="t" style="font-size:12px;font-weight:normal;color:#1A3A93;left:659.5px;top:242px;letter-spacing:-0.247px;">Not Selected</span>
<span class="t" style="font-size:12px;font-weight:normal;color:#1A3A93;left:751.25px;top:242px;letter-spacing:-0.322px;">Other:</span>
<span class="t" style="font-size:12px;font-weight:normal;color:#1A3A93;left:815.6px;top:242px;letter-spacing:-0.423px;">RT MAG Member Sync</span>
<span class="t" style="font-size:22.5px;font-weight:bold;color:#74ABE0;left:24.8px;top:273.5px;">?</span>
<span class="t" style="font-size:11px;font-weight:normal;color:#000;left:49.25px;top:272.75px;letter-spacing:0.032px;">Selected 5 of 13</span>
<span class="t" style="font-size:11px;font-weight:normal;color:#000;left:18.6px;top:301px;letter-spacing:0.298px;">Import member</span>
<span class="t" style="font-size:11px;font-weight:normal;color:#000;left:127.75px;top:301px;letter-spacing:-0.121px;">In Rt</span>
<span class="t" style="font-size:11px;font-weight:normal;color:#000;left:204.5px;top:301px;letter-spacing:-0.057px;">In Sync With Rt</span>
<span class="t" style="font-size:11px;font-weight:normal;color:#000;left:293.5px;top:301px;letter-spacing:-0.171px;">chemical_name</span>
<span class="t" style="font-size:11px;font-weight:normal;color:#000;left:390.5px;top:301px;letter-spacing:-0.306px;">cas_rn</span>
<span class="t" style="font-size:11px;font-weight:normal;color:#000;left:467px;top:301px;letter-spacing:0.086px;">Purpose</span>
<span class="t" style="font-size:11px;font-weight:normal;color:#000;left:544px;top:301px;letter-spacing:0.209px;">Matrix</span>
<span class="t" style="font-size:11px;font-weight:normal;color:#000;left:621px;top:301px;letter-spacing:0.196px;">total_or_dissolved</span>
<span class="t" style="font-size:11px;font-weight:normal;color:#000;left:722.5px;top:301px;letter-spacing:0.171px;">analytic_method</span>
<span class="t" style="font-size:11px;font-weight:normal;color:#000;left:814.5px;top:301px;letter-spacing:0.183px;">Contract Analytic Method</span>
<span class="t" style="font-size:11px;font-weight:normal;color:#000;left:126.45px;top:339.5px;letter-spacing:-0.550px;">Yes</span>
<span class="t" style="font-size:11px;font-weight:normal;color:#000;left:292.1px;top:339.5px;letter-spacing:0.100px;">Antimony</span>
<span class="t" style="font-size:11px;font-weight:normal;color:#000;left:389.5px;top:339.5px;letter-spacing:-0.207px;">7440-36-0</span>
<span class="t" style="font-size:11px;font-weight:normal;color:#000;left:126.45px;top:358.5px;letter-spacing:-0.550px;">Yes</span>
<span class="t" style="font-size:11px;font-weight:normal;color:#000;left:203.32px;top:358.5px;letter-spacing:-0.550px;">Yes</span>
<span class="t" style="font-size:11px;font-weight:normal;color:#000;left:811.5px;top:358.5px;letter-spacing:0.045px;">Tutorlab E200.7</span>
<span class="t" style="font-size:11px;font-weight:normal;color:#000;left:292.1px;top:358.5px;letter-spacing:0.100px;">Arsenic</span>
<span class="t" style="font-size:11px;font-weight:normal;color:#000;left:389.5px;top:358.5px;letter-spacing:-0.207px;">7440-38-2</span>
<span class="t" style="font-size:11px;font-weight:normal;color:#000;left:126.45px;top:377.5px;letter-spacing:-0.550px;">Yes</span>
<span class="t" style="font-size:11px;font-weight:normal;color:#000;left:292.1px;top:377.5px;letter-spacing:0.100px;">Beryllium</span>
<span class="t" style="font-size:11px;font-weight:normal;color:#000;left:389.5px;top:377.5px;letter-spacing:-0.207px;">7440-41-7</span>
<span class="t" style="font-size:11px;font-weight:normal;color:#000;left:126.45px;top:396.5px;letter-spacing:-0.550px;">Yes</span>
<span class="t" style="font-size:11px;font-weight:normal;color:#000;left:203.32px;top:396.5px;letter-spacing:-0.550px;">Yes</span>
<span class="t" style="font-size:11px;font-weight:normal;color:#000;left:811.5px;top:396.5px;letter-spacing:0.045px;">Tutorlab E200.7</span>
<span class="t" style="font-size:11px;font-weight:normal;color:#000;left:292.1px;top:396.5px;letter-spacing:0.100px;">Cadmium</span>
<span class="t" style="font-size:11px;font-weight:normal;color:#000;left:389.5px;top:396.5px;letter-spacing:-0.207px;">7440-43-9</span>
<span class="t" style="font-size:11px;font-weight:normal;color:#000;left:126.45px;top:415.5px;letter-spacing:-0.550px;">Yes</span>
<span class="t" style="font-size:11px;font-weight:normal;color:#000;left:203.32px;top:415.5px;letter-spacing:-0.550px;">Yes</span>
<span class="t" style="font-size:11px;font-weight:normal;color:#000;left:811.5px;top:415.5px;letter-spacing:0.045px;">Tutorlab E200.7</span>
<span class="t" style="font-size:11px;font-weight:normal;color:#000;left:292.1px;top:415.5px;letter-spacing:0.100px;">Chromium</span>
<span class="t" style="font-size:11px;font-weight:normal;color:#000;left:389.5px;top:415.5px;letter-spacing:-0.207px;">7440-47-3</span>
<span class="t" style="font-size:11px;font-weight:normal;color:#000;left:126.45px;top:434.5px;letter-spacing:-0.550px;">Yes</span>
<span class="t" style="font-size:11px;font-weight:normal;color:#000;left:292.1px;top:434.5px;letter-spacing:0.100px;">Copper</span>
<span class="t" style="font-size:11px;font-weight:normal;color:#000;left:389.5px;top:434.5px;letter-spacing:-0.207px;">7440-50-8</span>
<span class="t" style="font-size:11px;font-weight:normal;color:#000;left:126.45px;top:453.5px;letter-spacing:-0.550px;">Yes</span>
<span class="t" style="font-size:11px;font-weight:normal;color:#000;left:292.1px;top:453.5px;letter-spacing:0.100px;">Lead</span>
<span class="t" style="font-size:11px;font-weight:normal;color:#000;left:389.5px;top:453.5px;letter-spacing:-0.207px;">7439-92-1</span>
<span class="t" style="font-size:11px;font-weight:normal;color:#000;left:126.45px;top:472.5px;letter-spacing:-0.550px;">Yes</span>
<span class="t" style="font-size:11px;font-weight:normal;color:#000;left:203.32px;top:472.5px;letter-spacing:-0.550px;">Yes</span>
<span class="t" style="font-size:11px;font-weight:normal;color:#000;left:811.5px;top:472.5px;letter-spacing:0.045px;">Tutorlab E200.7</span>
<span class="t" style="font-size:11px;font-weight:normal;color:#000;left:292.1px;top:472.5px;letter-spacing:0.100px;">Mercury</span>
<span class="t" style="font-size:11px;font-weight:normal;color:#000;left:389.5px;top:472.5px;letter-spacing:-0.207px;">7439-97-6</span>
<span class="t" style="font-size:11px;font-weight:normal;color:#000;left:126.45px;top:491.5px;letter-spacing:-0.550px;">Yes</span>
<span class="t" style="font-size:11px;font-weight:normal;color:#000;left:203.32px;top:491.5px;letter-spacing:-0.550px;">Yes</span>
<span class="t" style="font-size:11px;font-weight:normal;color:#000;left:811.5px;top:491.5px;letter-spacing:0.045px;">Tutorlab E200.7</span>
<span class="t" style="font-size:11px;font-weight:normal;color:#000;left:292.1px;top:491.5px;letter-spacing:0.100px;">Nickel</span>
<span class="t" style="font-size:11px;font-weight:normal;color:#000;left:389.5px;top:491.5px;letter-spacing:-0.207px;">7440-02-0</span>
<span class="t" style="font-size:11px;font-weight:normal;color:#000;left:126.45px;top:510.5px;letter-spacing:-0.550px;">Yes</span>
<span class="t" style="font-size:11px;font-weight:normal;color:#000;left:292.1px;top:510.5px;letter-spacing:0.100px;">Selenium</span>
<span class="t" style="font-size:11px;font-weight:normal;color:#000;left:389.5px;top:510.5px;letter-spacing:-0.207px;">7782-49-2</span>
<span class="t" style="font-size:11px;font-weight:normal;color:#000;left:126.45px;top:529.5px;letter-spacing:-0.550px;">Yes</span>
<span class="t" style="font-size:11px;font-weight:normal;color:#000;left:292.1px;top:529.5px;letter-spacing:0.100px;">Silver</span>
<span class="t" style="font-size:11px;font-weight:normal;color:#000;left:389.5px;top:529.5px;letter-spacing:-0.207px;">7440-22-4</span>
<span class="t" style="font-size:11px;font-weight:normal;color:#000;left:126.45px;top:548.5px;letter-spacing:-0.550px;">Yes</span>
<span class="t" style="font-size:11px;font-weight:normal;color:#000;left:292.1px;top:548.5px;letter-spacing:0.100px;">Thallium</span>
<span class="t" style="font-size:11px;font-weight:normal;color:#000;left:389.5px;top:548.5px;letter-spacing:-0.207px;">7440-28-0</span>
<span class="t" style="font-size:12px;font-weight:normal;color:#000;left:368.5px;top:392.5px;letter-spacing:-0.326px;z-index:11;">Internal QA only</span>
<span class="t" style="font-size:12px;font-weight:normal;color:#fff;left:368.5px;top:407.5px;letter-spacing:-0.225px;z-index:11;">Required for regulatory reporting</span>
<span class="t" style="font-size:11px;font-weight:normal;color:#000;left:970.87px;top:574px;letter-spacing:-0.550px;">OK</span>
<span class="t" style="font-size:11px;font-weight:normal;color:#000;left:1063.5px;top:574px;letter-spacing:-0.500px;">Cancel</span>
<div style="left:12px;top:559px;width:1104px;height:8px;background:#EEF5FD;z-index:5"></div>
<div style="left:12px;top:559px;width:1103px;height:1px;background:#B4C7DD;z-index:6"></div>
<div style="left:10px;top:553px;width:1107px;height:9px;border:1px solid #CFD8E4;border-top:none;border-radius:0 0 4px 4px;z-index:6"></div>
</body></html>
